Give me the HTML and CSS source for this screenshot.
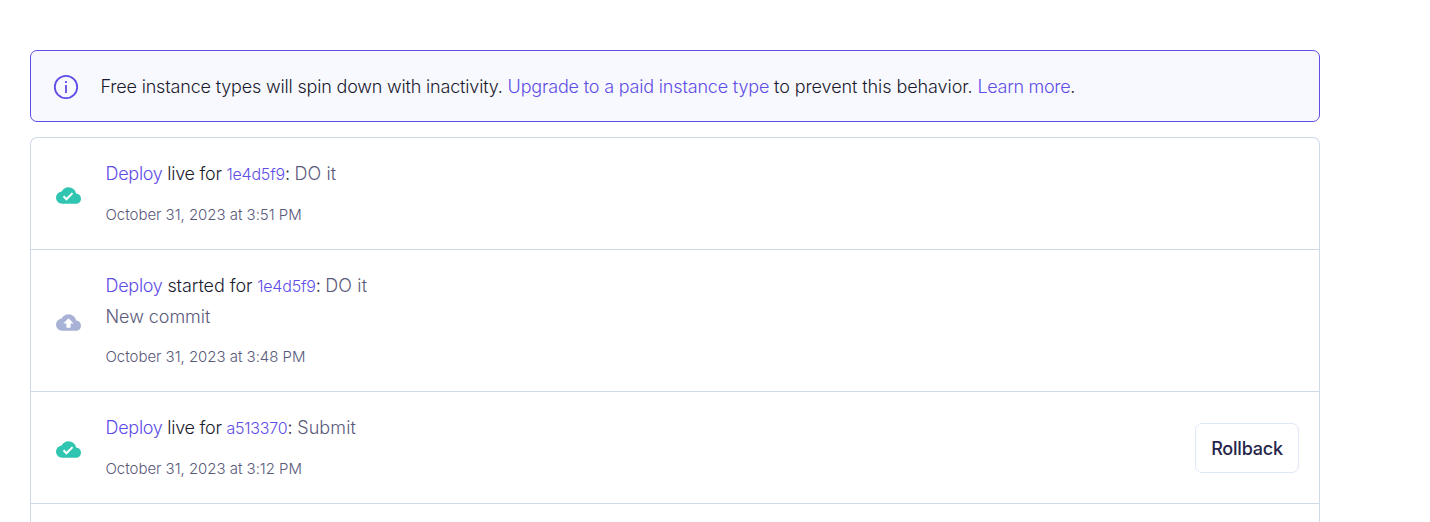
FILE: index.html
```
<!DOCTYPE html>
<html lang="en">
<head>
<meta charset="utf-8">
<title>Events</title>
<link rel="stylesheet" href="styles.css">
</head>
<body>
<main class="page">
  <div class="notice">
    <svg class="notice-icon" viewBox="0 0 26 26" fill="none" stroke="currentColor" stroke-width="1.8"><circle cx="13" cy="13" r="11.2"/><path d="M13 11v8"/><path d="M13 7v2"/></svg>
    <p class="notice-text">Free instance types will spin down with inactivity. <a class="link">Upgrade to a paid instance type</a> <span class="reason">to prevent this behavior.</span> <a class="link more">Learn more</a>.</p>
  </div>
  <ul class="events">
    <li class="event">
      <svg class="event-icon live" viewBox="0 0 24 24"><path d="M19.35 10.04A7.49 7.49 0 0 0 12 4C9.11 4 6.6 5.64 5.35 8.04A5.994 5.994 0 0 0 0 14c0 3.31 2.69 6 6 6h13c2.76 0 5-2.24 5-5 0-2.64-2.05-4.78-4.65-4.96zM10 17l-3.5-3.5 1.41-1.41L10 14.17l5.18-5.17 1.41 1.41L10 17z"/></svg>
      <div class="event-body">
        <p class="title"><a class="link">Deploy</a> live for <a class="link hash">1e4d5f9</a>: <span class="message">DO it</span></p>
        <p class="date">October 31, 2023 at 3:51 PM</p>
      </div>
    </li>
    <li class="event">
      <svg class="event-icon started" viewBox="0 0 24 24"><path d="M19.35 10.04A7.49 7.49 0 0 0 12 4C9.11 4 6.6 5.64 5.35 8.04A5.994 5.994 0 0 0 0 14c0 3.31 2.69 6 6 6h13c2.76 0 5-2.24 5-5 0-2.64-2.05-4.78-4.65-4.96zM14 13v4h-4v-4H7l5-5 5 5h-3z"/></svg>
      <div class="event-body">
        <p class="title"><a class="link">Deploy</a> <span class="action">started for</span> <a class="link hash">1e4d5f9</a>: <span class="message">DO it</span></p>
        <p class="reason-line">New commit</p>
        <p class="date">October 31, 2023 at 3:48 PM</p>
      </div>
    </li>
    <li class="event">
      <svg class="event-icon live" viewBox="0 0 24 24"><path d="M19.35 10.04A7.49 7.49 0 0 0 12 4C9.11 4 6.6 5.64 5.35 8.04A5.994 5.994 0 0 0 0 14c0 3.31 2.69 6 6 6h13c2.76 0 5-2.24 5-5 0-2.64-2.05-4.78-4.65-4.96zM10 17l-3.5-3.5 1.41-1.41L10 14.17l5.18-5.17 1.41 1.41L10 17z"/></svg>
      <div class="event-body">
        <p class="title"><a class="link">Deploy</a> live for <a class="link hash">a513370</a>: <span class="message">Submit</span></p>
        <p class="date">October 31, 2023 at 3:12 PM</p>
      </div>
      <button class="rollback">Rollback</button>
    </li>
    <li class="event next"></li>
  </ul>
</main>
</body>
</html>
```
FILE: styles.css
```
* { box-sizing: border-box; margin: 0; padding: 0; }
body {
  background: #fff;
  color: #1b1b2f;
  font: 300 18px/30px Inter, "Liberation Sans", sans-serif;
}
.page { width: 1290px; height: 472px; margin: 50px 0 0 30px; }
.link { color: #5e4de6; }
.notice {
  display: flex;
  align-items: center;
  height: 72px;
  padding-left: 22px;
  border: 1px solid #5e4de6;
  border-radius: 7px;
  background: #f8f9fe;
}
.notice-icon { width: 26px; height: 26px; margin: 1px 21.5px 0 0; color: #5e4de6; }
.notice-text { padding-top: 2px; white-space: nowrap; letter-spacing: -0.18px; }
.reason { letter-spacing: -0.08px; }
.more { letter-spacing: -0.3px; }
.events {
  height: 385px;
  margin-top: 15px;
  list-style: none;
  border: 1px solid #d0d9ea;
  border-bottom: 0;
  border-radius: 7px 7px 0 0;
}
.event {
  display: flex;
  align-items: center;
  padding: 21px 20px 22px 25px;
  border-bottom: 1px solid #d0d9ea;
}
.next { height: 18px; padding: 0; border-bottom: 0; }
.event-icon { width: 25px; height: 25px; margin: 4px 24.5px 0 0; }
.live { fill: #30c5b1; }
.started { fill: #a8b2d6; }
.event-body { flex: 1; }
.title { letter-spacing: -0.28px; }
.action { letter-spacing: -0.08px; }
.hash { font-size: 16px; letter-spacing: -0.2px; }
.message { color: #5a5a7b; letter-spacing: 0.13px; }
.reason-line { padding-top: 1px; margin-bottom: -1px; color: #5a5a7b; letter-spacing: -0.05px; }
.date { margin-top: 14px; font-size: 15px; line-height: 24px; letter-spacing: -0.03px; color: #5a5a7b; }
.rollback {
  width: 104px;
  height: 50px;
  margin-top: 2px;
  padding-top: 2px;
  border: 1px solid #dfe6f8;
  border-radius: 7px;
  background: #fff;
  color: #25254a;
  font: 500 18px/30px Inter, "Liberation Sans", sans-serif;
  letter-spacing: -0.2px;
}
```
